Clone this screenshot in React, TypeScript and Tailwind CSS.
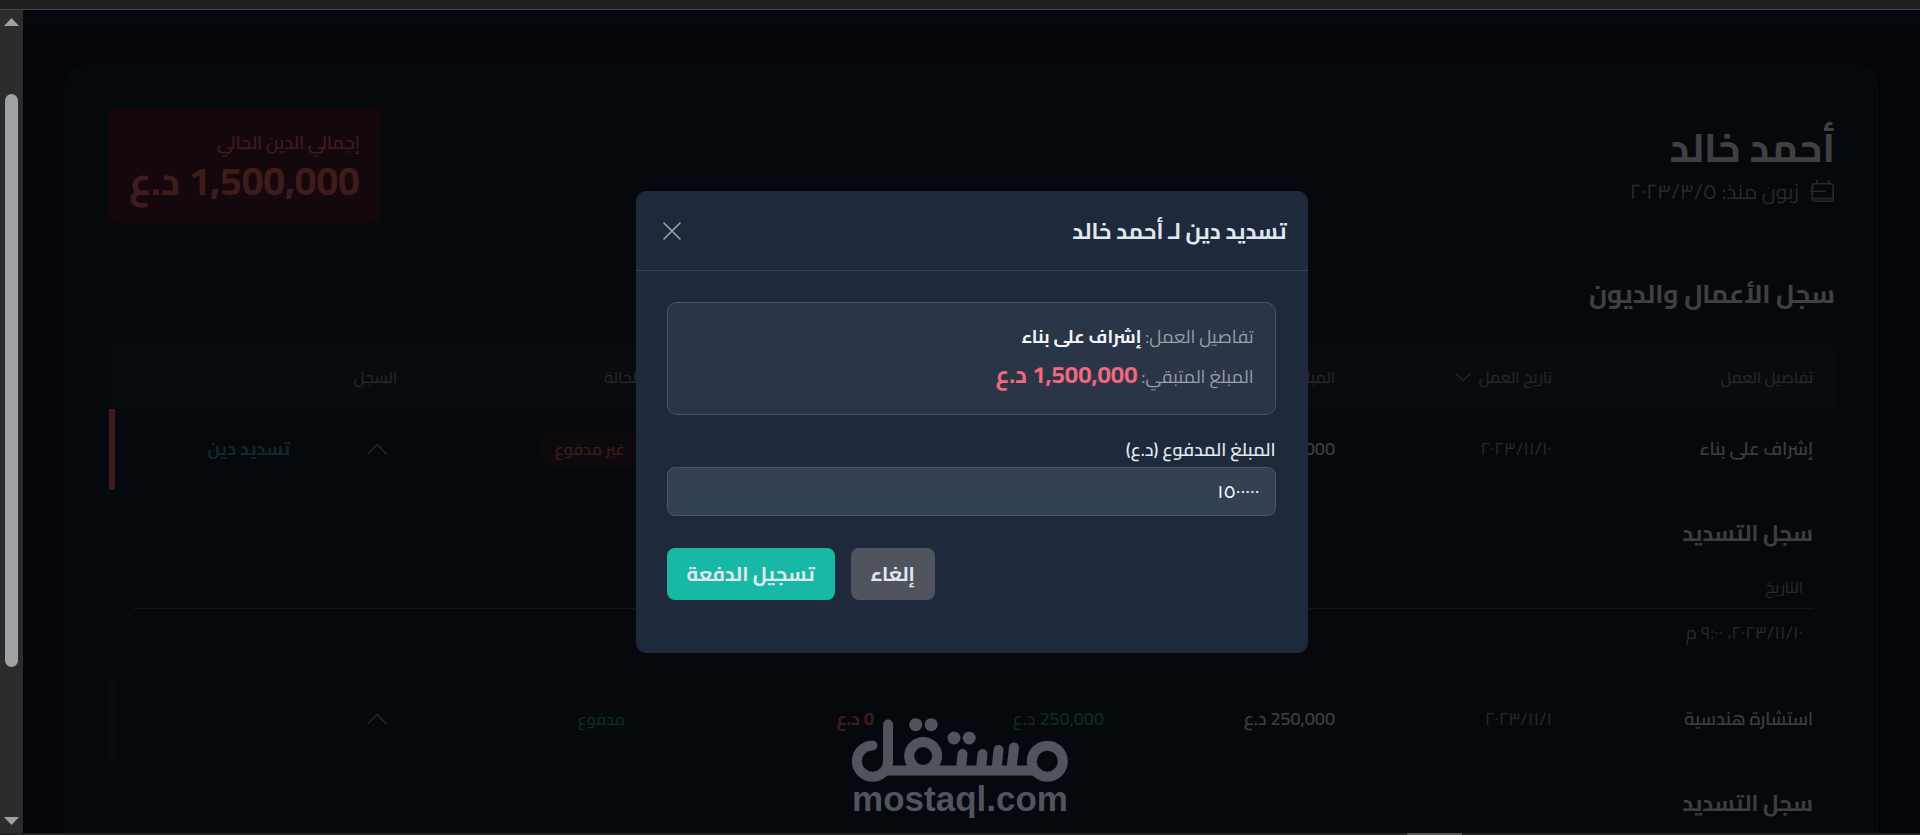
import type { ReactNode } from "react";

const ARABIC = (n: string) => n.replace(/\d/g, (d) => "٠١٢٣٤٥٦٧٨٩"[Number(d)]);

type Payment = { date: string };
type Job = {
  title: string;
  date: string;
  total: string;
  paid: string;
  rest: string;
  settled: boolean;
  payments: Payment[];
};

const JOBS: Job[] = [
  {
    title: "إشراف على بناء",
    date: "2023/11/10",
    total: "2,500,000 د.ع",
    paid: "1,000,000 د.ع",
    rest: "1,500,000 د.ع",
    settled: false,
    payments: [{ date: "2023/11/10، 9:00 م" }],
  },
  {
    title: "استشارة هندسية",
    date: "2023/11/1",
    total: "250,000 د.ع",
    paid: "250,000 د.ع",
    rest: "0 د.ع",
    settled: true,
    payments: [{ date: "2023/11/1، 9:00 م" }],
  },
];

function Chevron({ up = false }: { up?: boolean }) {
  return (
    <svg
      viewBox="0 0 20 20"
      className={up ? "size-5 rotate-180" : "size-4"}
      fill="none"
      stroke="currentColor"
      strokeWidth="1.5"
      strokeLinecap="round"
      strokeLinejoin="round"
      aria-hidden="true"
    >
      <path d="M1 5.5l9 9 9-9" />
    </svg>
  );
}

function CalendarIcon() {
  return (
    <svg
      viewBox="0 0 25 25"
      className="size-[25px]"
      fill="none"
      stroke="currentColor"
      strokeWidth="1.6"
      strokeLinecap="round"
      aria-hidden="true"
    >
      <rect x="2.2" y="4.7" width="21" height="17.6" rx="3" />
      <path d="M7 1.5v3M19 1.5v3M.7 12.2h14.500M2.500 19.6h20.5" />
    </svg>
  );
}

function Th({ children }: { children?: ReactNode }) {
  return <th className="px-[21px] text-start font-normal">{children}</th>;
}

function JobRows({ job }: { job: Job }) {
  return (
    <>
      <tr
        className={
          job.settled
            ? "h-20 border-b border-[#2a3440] border-e-[6px] border-e-[#28303a]"
            : "h-20 border-b border-[#2a3440] border-e-[6px] border-e-[#f87171]"
        }
      >
        <td className="px-[21px] font-semibold text-slate-100">{job.title}</td>
        <td className="px-[21px] text-[#9ca3af]">{ARABIC(job.date)}</td>
        <td className="px-[21px] font-semibold text-slate-100">{job.total}</td>
        <td className="px-[21px] font-semibold text-[#3aa5a2]">{job.paid}</td>
        <td className="px-[21px] font-bold text-[#f87171]">{job.rest}</td>
        <td className="px-[21px]">
          <span
            className={
              job.settled
                ? "inline-block rounded-full bg-[#1c2a34] px-4 py-[6px] text-base leading-6 font-semibold text-[#3aa5a2]"
                : "inline-block rounded-full bg-[#3a2430] px-4 py-[6px] text-base leading-6 font-semibold text-[#f87171]"
            }
          >
            {job.settled ? "مدفوع" : "غير مدفوع"}
          </span>
        </td>
        <td className="px-[21px]">
          <button type="button" aria-label="عرض السجل" className="block p-[10px] text-[#9ca3af]">
            <Chevron up />
          </button>
        </td>
        <td className="px-[21px]">
          {!job.settled && (
            <button type="button" className="font-bold text-[#3aa5a2]">
              تسديد دين
            </button>
          )}
        </td>
      </tr>
      <tr className="border-b border-[#2a3440]">
        <td colSpan={8} className="px-[21px] pt-6 pb-[21px]">
          <h3 className="text-[22px] leading-[38px] font-bold text-slate-100">سجل التسديد</h3>
          <table className="mt-3 w-full">
            <thead>
              <tr className="border-b border-[#475060] text-base text-[#9ca3af]">
                <th className="px-[10px] pt-2 pb-[6px] text-start leading-[30px] font-normal">التاريخ</th>
              </tr>
            </thead>
            <tbody>
              {job.payments.map((p) => (
                <tr key={p.date} className="h-[49px] border-b border-[#2a3440] text-[#9ca3af]">
                  <td className="px-[10px]">{ARABIC(p.date)}</td>
                </tr>
              ))}
            </tbody>
          </table>
        </td>
      </tr>
    </>
  );
}

function PaymentDialog() {
  return (
    <div
      role="dialog"
      aria-modal="true"
      aria-labelledby="dialog-title"
      className="w-full max-w-2xl rounded-[10px] bg-[#1e293b] text-slate-200"
    >
      <div className="flex h-20 items-center justify-between border-b border-[#364355] px-[21px] pt-[2px]">
        <h2 id="dialog-title" className="text-[22px] leading-9 font-bold">
          تسديد دين لـ أحمد خالد
        </h2>
        <button type="button" aria-label="إغلاق" className="p-[6px] text-[#a1a5ab]">
          <svg
            viewBox="0 0 18 18"
            className="size-[18px]"
            fill="none"
            stroke="currentColor"
            strokeWidth="1.6"
            strokeLinecap="round"
            aria-hidden="true"
          >
            <path d="M1 1l16 16M17 1L1 17" />
          </svg>
        </button>
      </div>
      <form className="ps-8 pe-[31px] pt-[31px] pb-[53px]">
        <div className="flex h-[113px] flex-col justify-center rounded-[10px] border border-[#4f545f] bg-[#2a3648] px-[21px] pb-[2px]">
          <p className="text-lg leading-[38px] text-[#9c9fa6]">
            تفاصيل العمل: <span className="font-bold text-slate-100">إشراف على بناء</span>
          </p>
          <p className="text-lg leading-[38px] text-[#9c9fa6]">
            المبلغ المتبقي: <span className="text-2xl leading-[38px] font-bold text-[#f2687d]">1,500,000 د.ع</span>
          </p>
        </div>
        <label htmlFor="amount" className="mt-[19px] mb-[1px] block text-lg leading-8 font-semibold">
          المبلغ المدفوع (د.ع)
        </label>
        <input
          id="amount"
          type="text"
          defaultValue="١٥٠٠٠٠٠"
          className="h-[49px] w-full rounded-lg border border-[#4f545f] bg-[#334153] ps-[15px] pe-4 text-lg font-semibold text-slate-100"
        />
        <div className="mt-8 flex justify-end gap-4">
          <button type="button" className="h-[52px] rounded-lg bg-[#4f545f] px-5 text-xl font-bold">
            إلغاء
          </button>
          <button type="submit" className="h-[52px] rounded-lg bg-[#17b8a6] px-5 text-xl font-bold">
            تسجيل الدفعة
          </button>
        </div>
      </form>
    </div>
  );
}

function Watermark() {
  return (
    <div
      dir="ltr"
      className="absolute bottom-[19px] left-1/2 flex w-[220px] -translate-x-1/2 flex-col items-center text-[#50545f]"
    >
      <svg viewBox="0 -2 220 66" className="h-[66px] w-[220px]" aria-hidden="true">
        <g fill="none" stroke="currentColor" strokeWidth="10" strokeLinecap="round">
          <path d="M22.500 27.500a15.600 15.600 0 1 0 15.600 15.600V6.500" />
          <path d="M36 52.500H184" strokeLinecap="butt" />
          <circle cx="73.200" cy="38" r="14" />
          <circle cx="197.300" cy="43.200" r="15.500" />
          <path d="M112.500 36l-1.500 15M132.500 36l-1.500 15M148.500 32l-2 19M164 29.500l-2.500 21" />
        </g>
        <g fill="currentColor">
          <circle cx="65.700" cy="6.700" r="6.500" />
          <circle cx="81.200" cy="6.700" r="6.500" />
          <circle cx="104" cy="20" r="6.500" />
          <circle cx="119.200" cy="20" r="6.500" />
        </g>
      </svg>
      <span className="font-['Liberation_Sans',sans-serif] text-[35px] leading-[34px] font-bold">
        mostaql.com
      </span>
    </div>
  );
}

function ScrollRail() {
  return (
    <div className="flex w-[23px] shrink-0 flex-col items-center bg-[#2c2c2c]" aria-hidden="true">
      <svg viewBox="0 0 15 8" className="mt-2 h-2 w-[15px]" fill="#9fa2a4">
        <path d="M7.500 0L15 8H0z" />
      </svg>
      <div className="flex w-full grow flex-col items-center pt-[68px] pb-[150px]">
        <div className="w-[13px] grow rounded-full bg-[#9fa2a4]" />
      </div>
      <svg viewBox="0 0 15 8" className="mb-2 h-2 w-[15px]" fill="#9fa2a4">
        <path d="M7.500 8L15 0H0z" />
      </svg>
    </div>
  );
}

export default function App() {
  return (
    <div className="relative flex h-screen flex-col overflow-hidden bg-[#1f1f1f] font-['Cairo','Noto_Sans_Arabic',sans-serif]">
      <div className="h-[10px] shrink-0 border-b border-[#454545]" />
      <div className="flex min-h-0 grow">
        <ScrollRail />
        <div dir="rtl" className="relative min-w-0 grow overflow-hidden bg-[#0c1020]">
          <header className="h-[13px] border-b border-[#28323e] bg-[#162232]" />
          <main className="px-[42px] pt-[42px]">
            <section className="rounded-[20px] border border-[#28323e] bg-[#162232] px-[42px] pt-[42px] pb-10">
              <div className="flex items-center justify-between border-b border-[#28323e] pb-[21px]">
                <div>
                  <h1 className="text-[40px] leading-[48px] font-bold text-white">أحمد خالد</h1>
                  <p className="mt-1 flex items-center gap-[11px] text-[21px] leading-8 text-[#9ca3af]">
                    <CalendarIcon />
                    <span>زبون منذ: {ARABIC("2023/3/5")}</span>
                  </p>
                </div>
                <div className="rounded-[10px] bg-[#542032] px-[21px] py-5 text-[#f87171]">
                  <p className="text-lg leading-[30px] font-semibold">إجمالي الدين الحالي</p>
                  <p className="text-[39px] leading-[45px] font-bold">1,500,000 د.ع</p>
                </div>
              </div>
              <h2 className="mt-7 text-[26px] leading-[42px] font-bold text-white">سجل الأعمال والديون</h2>
              <div className="mt-7 overflow-hidden rounded-[10px] border border-[#2a3440]">
                <table className="w-full table-fixed border-collapse text-lg">
                  <colgroup>
                    <col className="w-[261px]" />
                    <col className="w-[217px]" />
                    <col className="w-[231px]" />
                    <col className="w-[230px]" />
                    <col className="w-[233px]" />
                    <col className="w-[244px]" />
                    <col className="w-[107px]" />
                    <col />
                  </colgroup>
                  <thead>
                    <tr className="h-[65px] bg-[#24303a] text-base text-[#9ca3af]">
                      <Th>تفاصيل العمل</Th>
                      <Th>
                        <span className="flex items-center gap-2">
                          تاريخ العمل <Chevron />
                        </span>
                      </Th>
                      <Th>المبلغ الكلي</Th>
                      <Th>المدفوع</Th>
                      <Th>المتبقي</Th>
                      <Th>الحالة</Th>
                      <Th>السجل</Th>
                      <Th />
                    </tr>
                  </thead>
                  <tbody>
                    {JOBS.map((job) => (
                      <JobRows key={job.title} job={job} />
                    ))}
                  </tbody>
                </table>
              </div>
            </section>
          </main>
          <div className="absolute inset-0 flex items-center justify-center bg-black/75">
            <PaymentDialog />
          </div>
        </div>
      </div>
      <Watermark />
      <div className="flex h-[2px] shrink-0 justify-end bg-[#222224] pr-[458px]">
        <div className="w-[55px] bg-[#55555a]" />
      </div>
    </div>
  );
}
